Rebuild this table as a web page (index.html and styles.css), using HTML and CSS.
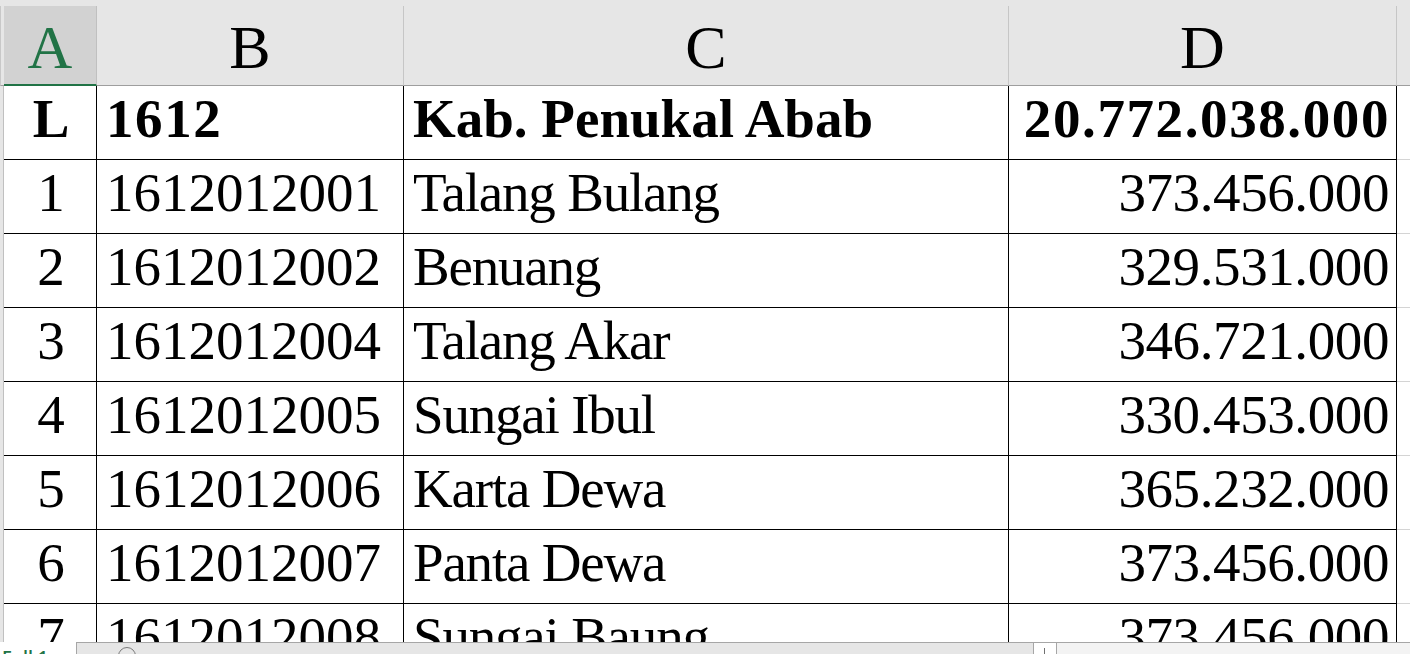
FILE: index.html
```html
<!DOCTYPE html>
<html>
<head>
<meta charset="utf-8">
<link rel="stylesheet" href="styles.css">
</head>
<body>
<div class="app">
  <div class="sheet">
    <div class="grid">
      <div class="corner"></div>
      <div class="hd sel">A</div>
      <div class="hd">B</div>
      <div class="hd">C</div>
      <div class="hd">D</div>
      <div class="hd rest"></div>

      <div class="rh"></div>
      <div class="c ctr b">L</div>
      <div class="c b bn">1612</div>
      <div class="c b">Kab. Penukal Abab</div>
      <div class="c num b bn">20.772.038.000</div>
      <div class="fill"></div>

      <div class="rh"></div>
      <div class="c ctr">1</div>
      <div class="c">1612012001</div>
      <div class="c name">Talang Bulang</div>
      <div class="c num">373.456.000</div>
      <div class="fill"></div>

      <div class="rh"></div>
      <div class="c ctr">2</div>
      <div class="c">1612012002</div>
      <div class="c name">Benuang</div>
      <div class="c num">329.531.000</div>
      <div class="fill"></div>

      <div class="rh"></div>
      <div class="c ctr">3</div>
      <div class="c">1612012004</div>
      <div class="c name">Talang Akar</div>
      <div class="c num">346.721.000</div>
      <div class="fill"></div>

      <div class="rh"></div>
      <div class="c ctr">4</div>
      <div class="c">1612012005</div>
      <div class="c name">Sungai Ibul</div>
      <div class="c num">330.453.000</div>
      <div class="fill"></div>

      <div class="rh"></div>
      <div class="c ctr">5</div>
      <div class="c">1612012006</div>
      <div class="c name">Karta Dewa</div>
      <div class="c num">365.232.000</div>
      <div class="fill"></div>

      <div class="rh"></div>
      <div class="c ctr">6</div>
      <div class="c">1612012007</div>
      <div class="c name">Panta Dewa</div>
      <div class="c num">373.456.000</div>
      <div class="fill"></div>

      <div class="rh"></div>
      <div class="c ctr">7</div>
      <div class="c">1612012008</div>
      <div class="c name">Sungai Baung</div>
      <div class="c num">373.456.000</div>
      <div class="fill"></div>
    </div>
  </div>
  <div class="bottom">
    <div class="tab">Full 1</div>
    <div class="scroll-left"><span class="knob"></span></div>
    <div class="plus"></div>
    <div class="scroll-right"></div>
  </div>
</div>
</body>
</html>
```

FILE: styles.css
```css
html, body {
  margin: 0;
  padding: 0;
  background: #ffffff;
}

.app {
  width: 1410px;
  height: 654px;
  display: flex;
  flex-direction: column;
  overflow: hidden;
}

.sheet {
  height: 642px;
  overflow: hidden;
  background: #e6e6e6;
  padding-top: 6px;
  box-sizing: border-box;
}

.grid {
  display: grid;
  grid-template-columns: 4px 93px 307px 605px 388px 1fr;
  grid-template-rows: 80px repeat(8, 74px);
  font-family: "Liberation Serif", "Times New Roman", serif;
  color: #000;
}

.corner {
  background: #e6e6e6;
  border-left: 1px solid #c8c8c8;
  border-bottom: 1px solid #9e9e9e;
  box-sizing: border-box;
}

.hd {
  background: #e6e6e6;
  border-right: 1px solid #c6c6c6;
  border-bottom: 1px solid #9e9e9e;
  box-sizing: border-box;
  text-align: center;
  font-size: 62px;
  line-height: 70px;
  padding-top: 6px;
  overflow: hidden;
}

.hd.sel {
  background: #d2d2d2;
  color: #217346;
  border-bottom: 2px solid #217346;
  border-right-color: #c0c0c0;
}

.hd.rest {
  border-right: none;
}

.rh {
  background: #e6e6e6;
  border-right: 1px solid #c0c0c0;
  box-sizing: border-box;
}

.c {
  background: #fff;
  border-right: 1px solid #000;
  border-bottom: 1px solid #000;
  box-sizing: border-box;
  font-size: 55px;
  line-height: 65px;
  padding: 0 7px 8px 9px;
  white-space: nowrap;
  overflow: hidden;
}

.c.ctr {
  text-align: center;
  padding-left: 2px;
  padding-right: 0;
}

.c.num {
  text-align: right;
  padding-right: 7px;
  letter-spacing: -0.4px;
}

.c.name {
  letter-spacing: -1.2px;
}

.c.b {
  font-weight: bold;
}

.c.bn {
  letter-spacing: 1.6px;
}

.c.num.bn {
  padding-right: 6px;
}

.fill {
  background: #fff;
  border-bottom: 1px solid #d4d4d4;
}

.bottom {
  height: 12px;
  display: flex;
  background: #fff;
}

.tab {
  width: 76px;
  font-family: "Open Sans", "Liberation Sans", sans-serif;
  font-size: 18px;
  font-weight: 600;
  color: #217346;
  line-height: 30px;
  padding-left: 2px;
  box-sizing: border-box;
  overflow: hidden;
  white-space: nowrap;
}

.scroll-left {
  width: 957px;
  background: #e6e6e6;
  border-top: 1px solid #a6a6a6;
  border-left: 1px solid #a6a6a6;
  box-sizing: border-box;
  position: relative;
}

.knob {
  position: absolute;
  left: 41px;
  top: 4px;
  width: 16px;
  height: 16px;
  border: 1px solid #7a7a7a;
  border-radius: 50%;
  background: #e6e6e6;
}

.plus {
  width: 24px;
  background: #fff;
  border-top: 1px solid #a6a6a6;
  border-left: 1px solid #a6a6a6;
  border-right: 1px solid #a6a6a6;
  box-sizing: border-box;
  position: relative;
}

.plus::after {
  content: "";
  position: absolute;
  left: 10px;
  top: 5px;
  width: 1px;
  height: 8px;
  background: #707070;
}

.scroll-right {
  flex: 1;
  background: #f3f3f3;
  border-top: 1px solid #a6a6a6;
  box-sizing: border-box;
}
```
